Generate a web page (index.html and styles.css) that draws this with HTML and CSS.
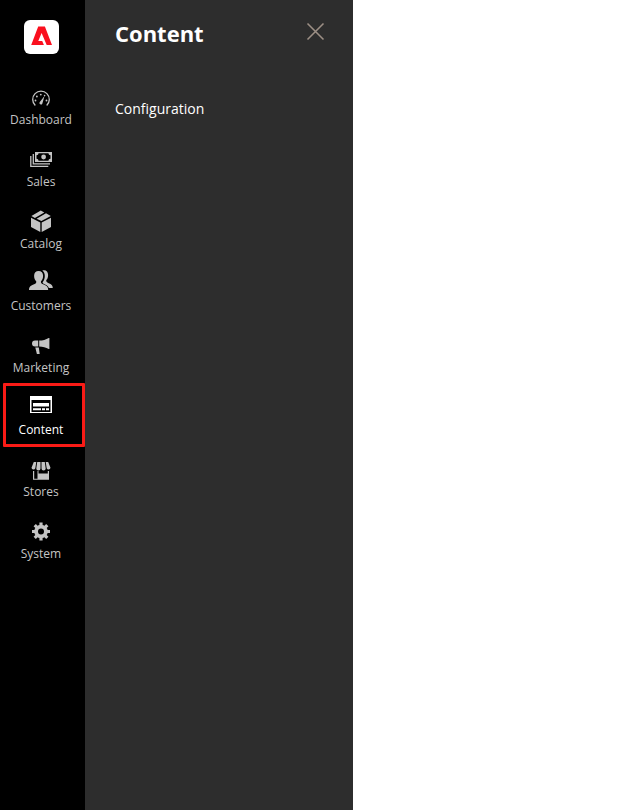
FILE: index.html
```html
<!DOCTYPE html>
<html lang="en">
<head>
<meta charset="utf-8">
<title>Content</title>
<link rel="stylesheet" href="styles.css">
</head>
<body>
<div class="layout">
  <aside class="sidebar">
    <a class="logo" href="#" aria-label="Home">
      <svg viewBox="0 0 35 34"><path fill="#fa0f1e" d="M14.200 6.500h6.700L28 25h-5.300l-5.100-12-3.300 8h3.900l1.700 4H7.200z"/></svg>
    </a>
    <nav class="menu">
      <a class="item" href="#">
        <svg class="icon" viewBox="0 0 28 28"><path d="M8.300 23.500a8.300 8.300 0 1 1 11.400 0" fill="none" stroke="currentColor" stroke-width="1.300"/><path d="M12.600 20.300l4.900-6.300-2.200 7.700a1.500 1.500 0 1 1-2.700-1.400z"/><g><circle cx="8.500" cy="18.500" r=".9"/><circle cx="9.900" cy="14.500" r=".9"/><circle cx="13.800" cy="12.600" r=".9"/><circle cx="17.600" cy="13.600" r=".8"/><circle cx="19.500" cy="18.500" r=".9"/></g></svg>
        <span>Dashboard</span>
      </a>
      <a class="item" href="#">
        <svg class="icon" viewBox="0 0 28 28"><path fill-rule="evenodd" d="M8 8h17v10H8zM11.500 9.300c0 1.200-.8 2-2 2v3.400c1.200 0 2 .8 2 2h10c0-1.200.8-2 2-2v-3.400c-1.200 0-2-.8-2-2z"/><circle cx="16.600" cy="13" r="2.400"/><path d="M6.300 10v9.800H23M3.800 12v10.300h17.500" fill="none" stroke="currentColor" stroke-width="1.300"/></svg>
        <span>Sales</span>
      </a>
      <a class="item" href="#">
        <svg class="icon" viewBox="0 0 28 28"><path d="M4 11.800l9.300 4.600V26L4 20.900zM24 11.800l-9.300 4.600V26l9.300-5.100zM13.800 4.600l3.500 1.800-9.400 5.500-3.500-1.800zM19 7.300l4.800 2.800-9.400 5-4.800-2.300z"/></svg>
        <span>Catalog</span>
      </a>
      <a class="item" href="#">
        <svg class="icon" viewBox="0 0 28 28"><path d="M11.600 2.900c2.800 0 4.500 2 4.500 4.800 0 2.200-.8 4.400-2.100 5.600-.3 1.400.2 2.200 2.100 3 3.300 1.300 5 2.200 5.100 5.600H2c.1-3.400 1.800-4.300 5.100-5.600 1.900-.8 2.400-1.600 2.100-3C7.900 12.100 7.100 9.900 7.100 7.700c0-2.800 1.700-4.800 4.500-4.800z"/><path d="M15.300 2.600c3.100-1.300 5.800.7 5.800 4.300 0 2.200-.6 4-1.800 5.200-.4 1.500.4 2.300 2.400 3.100 2.700 1.100 4 1.900 4.100 4.700h-3.900c-.8-2.300-3.200-3.300-5.700-4.500-.6-.3-.7-.8-.4-1.300 1.300-1.600 2-3.800 2-6.100 0-2.200-.9-4.200-2.500-5.400z"/></svg>
        <span>Customers</span>
      </a>
      <a class="item" href="#">
        <svg class="icon" viewBox="0 0 28 28"><path d="M8 10.500h3.200v6H8a3 3 0 0 1 0-6zM12.200 10.500c3.500 0 6.800-1 9.500-2.600h.7v11.200h-.7c-2.700-1.600-6-2.600-9.500-2.600zM8.300 17.500h3.500l.9 6.400H9.900z"/></svg>
        <span>Marketing</span>
      </a>
      <a class="item active" href="#">
        <svg class="icon" viewBox="0 0 28 28"><path fill-rule="evenodd" d="M3 4h22v17H3zM4.500 8v12h19V8z"/><path d="M6 11h16v3.500H6zM6 16.300h8v2H6zM15 16.300h3v2h-3zM19 16.300h3v2h-3z"/></svg>
        <span>Content</span>
      </a>
      <a class="item" href="#">
        <svg class="icon" viewBox="0 0 28 28"><path d="M6.800 8h2.500l-1 6.300a2 2 0 0 1-3.800-.5zM10.200 8h3.300v6.400a2 2 0 0 1-4.200 0zM14.500 8h3.300l.9 6.400a2 2 0 0 1-4.200 0zM18.700 8h2.500l2.300 5.800a2 2 0 0 1-3.800.5z"/><path fill-rule="evenodd" d="M6 17h1.200v7.700h3.300V17h1v2.500h9.300V17H22v8.700H6z"/></svg>
        <span>Stores</span>
      </a>
      <a class="item" href="#">
        <svg class="icon" viewBox="0 0 28 28"><circle cx="14" cy="15.500" r="4.900" fill="none" stroke="currentColor" stroke-width="3.800"/><path d="M14 6.500v3M14 21.500v3M5 15.500h3M20 15.500h3M7.700 9.200l2 2M18.300 19.800l2 2M7.700 21.800l2-2M18.300 11.200l2-2" stroke="currentColor" stroke-width="3.200"/></svg>
        <span>System</span>
      </a>
    </nav>
  </aside>
  <section class="panel">
    <header class="panel-head">
      <h1>Content</h1>
      <button class="close" aria-label="Close"><svg viewBox="0 0 18 18"><path d="M1.500.5l16 16M17.500.5l-16 16" fill="none" stroke="#9c8f85" stroke-width="1.600"/></svg></button>
    </header>
    <a class="link" href="#">Configuration</a>
  </section>
</div>
</body>
</html>
```
FILE: styles.css
```css
* { box-sizing: border-box; }
body {
  margin: 0;
  background: #fff;
  font-family: "Open Sans", sans-serif;
}
a { color: inherit; text-decoration: none; }
svg { display: block; }
.layout { display: flex; height: 810px; }
.sidebar {
  width: 85px;
  padding: 19.5px 3px 0 0;
  background: #000;
}
.logo {
  display: block;
  width: 35px;
  height: 34px;
  margin: 0 0 20.5px 24px;
  border-radius: 6px;
  background: #fff;
}
.menu { display: flex; flex-direction: column; }
.item {
  position: relative;
  display: flex;
  flex-direction: column;
  align-items: center;
  gap: 1px;
  height: 62px;
  padding-top: 8px;
  color: #c4c4c4;
  font-size: 12px;
  line-height: 18px;
}
.icon { width: 28px; height: 28px; fill: currentColor; }
.active { color: #fff; }
.active::after {
  content: "";
  box-sizing: border-box;
  position: absolute;
  top: -1px;
  left: 3px;
  width: 82px;
  height: 64px;
  border: 3px solid #f91b16;
  border-radius: 1px;
}
.panel {
  width: 268px;
  padding: 17px 29px 0 30px;
  background: #2d2d2d;
  color: #fff;
}
.panel-head {
  display: flex;
  justify-content: space-between;
  align-items: flex-start;
  height: 82px;
}
h1 { margin: 0; font-size: 22px; font-weight: 700; line-height: 32px; }
.close { margin: 6px 0 0; padding: 0; border: 0; background: none; }
.close svg { width: 18px; height: 18px; overflow: visible; }
.link { display: block; font-size: 14px; line-height: 20px; }
```
